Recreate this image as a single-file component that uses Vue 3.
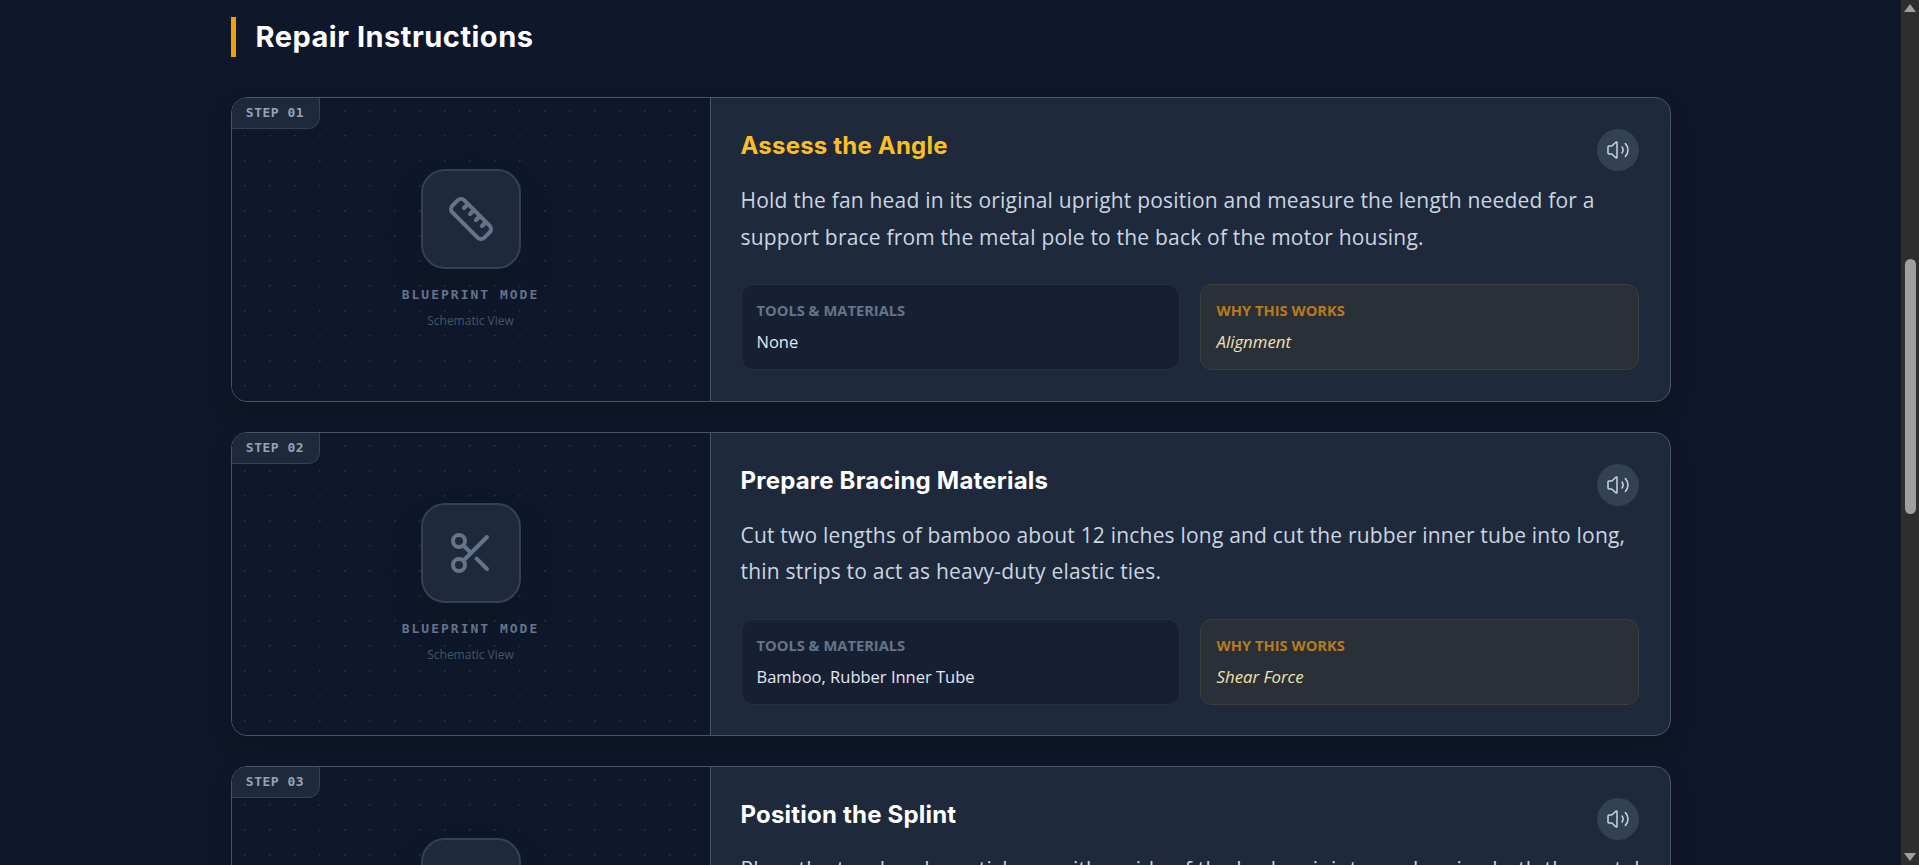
<script setup>
const steps = [
  {
    n: '01', title: 'Assess the Angle', icon: 'ruler', active: true,
    text: 'Hold the fan head in its original upright position and measure the length needed for a support brace from the metal pole to the back of the motor housing.',
    tools: 'None', why: 'Alignment'
  },
  {
    n: '02', title: 'Prepare Bracing Materials', icon: 'scissors',
    text: 'Cut two lengths of bamboo about 12 inches long and cut the rubber inner tube into long, thin strips to act as heavy-duty elastic ties.',
    tools: 'Bamboo, Rubber Inner Tube', why: 'Shear Force'
  },
  {
    n: '03', title: 'Position the Splint', icon: 'none',
    text: 'Place the two bamboo sticks on either side of the broken joint, overlapping both the metal pole and the motor housing.',
    tools: 'Bamboo', why: 'Leverage'
  }
]
</script>

<template>
  <div class="shell">
    <main class="page">
      <div class="wrap">
        <h2 class="heading">Repair Instructions</h2>
        <article v-for="s in steps" :key="s.n" class="card">
          <div class="visual">
            <span class="tag">STEP {{ s.n }}</span>
            <div class="iconbox">
              <svg v-if="s.icon === 'ruler'" viewBox="0 0 24 24" class="ico">
                <path d="M21.3 15.3a2.4 2.4 0 0 1 0 3.4l-2.6 2.6a2.4 2.4 0 0 1-3.4 0L2.7 8.7a2.41 2.41 0 0 1 0-3.4l2.6-2.6a2.41 2.41 0 0 1 3.4 0Z"/>
                <path d="m14.5 12.5 2-2"/><path d="m11.5 9.5 2-2"/><path d="m8.5 6.5 2-2"/><path d="m17.5 15.5 2-2"/>
              </svg>
              <svg v-else-if="s.icon === 'scissors'" viewBox="0 0 24 24" class="ico">
                <circle cx="6" cy="6" r="3"/><path d="M8.12 8.12 12 12"/><path d="M20 4 8.12 15.88"/><circle cx="6" cy="18" r="3"/><path d="M14.8 14.8 20 20"/>
              </svg>
            </div>
            <div class="mode">BLUEPRINT MODE</div>
            <div class="view">Schematic View</div>
          </div>
          <div class="body">
            <div class="head">
              <h3 class="title" :class="{ active: s.active }">{{ s.title }}</h3>
              <button class="speak" type="button" aria-label="Read aloud">
                <svg viewBox="0 0 24 24" class="vol">
                  <path d="M11 4.702a.705.705 0 0 0-1.203-.498L6.413 7.587A1.4 1.4 0 0 1 5.416 8H3a1 1 0 0 0-1 1v6a1 1 0 0 0 1 1h2.416a1.4 1.4 0 0 1 .997.413l3.383 3.384A.705.705 0 0 0 11 19.298z"/>
                  <path d="M16 9a5 5 0 0 1 0 6"/><path d="M19.364 18.364a9 9 0 0 0 0-12.728"/>
                </svg>
              </button>
            </div>
            <p class="text">{{ s.text }}</p>
            <div class="boxes">
              <div class="box tools">
                <div class="label">TOOLS &amp; MATERIALS</div>
                <div class="val">{{ s.tools }}</div>
              </div>
              <div class="box why">
                <div class="label">WHY THIS WORKS</div>
                <div class="val">{{ s.why }}</div>
              </div>
            </div>
          </div>
        </article>
      </div>
    </main>
    <div class="scrollbar">
      <span class="arrow up"></span>
      <div class="track"><div class="thumb"></div></div>
      <span class="arrow down"></span>
    </div>
  </div>
</template>

<style>
html, body { margin: 0; height: 100%; overflow: hidden; background: #0f172a; }
</style>

<style scoped>
.shell { display: flex; height: 865px; overflow: hidden; background: #0f172a; }
.page { flex: 1; min-width: 0; overflow: hidden; }
.wrap { width: 1440px; margin: 0 auto; padding-top: 17px; }
.heading {
  margin: 0 0 40px; padding-left: 20px; border-left: 5px solid #f59e0b;
  height: 40px; font: 700 29px/40px Inter, sans-serif; letter-spacing: 0.5px; color: #fff;
}
.card {
  display: grid; grid-template-columns: 479px 1fr; height: 304.5px; box-sizing: border-box;
  margin-bottom: 30px; border: 1px solid #475569; border-radius: 16px; overflow: hidden; background: #1e293b;
  box-shadow: 0 10px 25px rgba(0, 0, 0, 0.2);
}
.visual {
  position: relative; display: flex; flex-direction: column; align-items: center; justify-content: center;
  padding-bottom: 1px; box-sizing: border-box;
  background-color: #0f172a; border-right: 1px solid #475569;
  background-image: radial-gradient(#222e42 1px, transparent 1px); background-size: 25px 25px;
}
.tag {
  position: absolute; left: 0; top: 0; box-sizing: border-box; width: 88px; height: 31px; text-align: center;
  background: #1e293b; border-right: 1px solid #334155; border-bottom: 1px solid #334155; border-radius: 0 0 12px 0;
  font: 700 13px/30px "DejaVu Sans Mono", monospace; letter-spacing: 0.5px; color: #94a3b8;
}
.iconbox {
  box-sizing: border-box; width: 100px; height: 100px; border: 2px solid #334155; border-radius: 24px;
  background: #1e293b; display: flex; align-items: center; justify-content: center;
  box-shadow: 0 20px 40px rgba(0, 0, 0, 0.1);
}
.ico { width: 48px; height: 48px; fill: none; stroke: #64748b; stroke-width: 2; stroke-linecap: round; stroke-linejoin: round; }
.mode { margin-top: 17px; font: 700 13px/18px "DejaVu Sans Mono", monospace; letter-spacing: 2px; color: #64748b; }
.view { margin-top: 9px; font: 400 12px/16px "Open Sans", sans-serif; color: #475569; }
.body { padding: 31px 31px 0 30px; min-width: 0; }
.head { display: flex; justify-content: space-between; align-items: flex-start; margin-bottom: 11px; }
.title { margin: 0; padding-top: 1px; font: 700 24px/32px Inter, sans-serif; letter-spacing: 0.2px; color: #fff; }
.title.active { color: #fbbf24; }
.speak { width: 42px; height: 42px; border: 0; padding: 0; border-radius: 50%; background: #334155; display: flex; align-items: center; justify-content: center; }
.vol { width: 24px; height: 24px; fill: none; stroke: #cbd5e1; stroke-width: 1.5; stroke-linecap: round; stroke-linejoin: round; }
.text { margin: 0 -14px 29px 0; font: 400 21px/36.5px "Open Sans", sans-serif; letter-spacing: 0.2px; color: #cbd5e1; }
.boxes { display: grid; grid-template-columns: 1fr 1fr; gap: 20px; }
.box { box-sizing: border-box; height: 86px; padding: 15px 15px 0; border-radius: 12px; border: 1px solid #1e293b; }
.tools { background: #172033; border-color: #243044; }
.why { padding-left: 16px; background: #2a3038; border-color: #3d3d3c; }
.label { font: 700 14.7px/20px "Open Sans", sans-serif; color: #64748b; }
.why .label { color: #b97a1c; }
.val { margin-top: 10px; font: 400 16.5px/24px "Open Sans", sans-serif; color: #e2e8f0; }
.why .val { font-size: 16.8px; font-style: italic; color: #f0e2ae; }
.scrollbar { position: relative; flex: 0 0 18px; width: 18px; background: #2e2e2e; display: flex; flex-direction: column; align-items: center; }
.track { flex: 1; width: 100%; position: relative; }
.thumb { position: absolute; left: 4px; top: 259px; width: 11px; height: 255px; border-radius: 5.5px; background: #9f9f9f; }
.arrow { position: absolute; left: 3px; width: 0; height: 0; border-left: 6px solid transparent; border-right: 6px solid transparent; }
.arrow.up { top: 4px; border-bottom: 8px solid #9f9f9f; }
.arrow.down { bottom: 4px; border-top: 8px solid #9f9f9f; }
</style>
